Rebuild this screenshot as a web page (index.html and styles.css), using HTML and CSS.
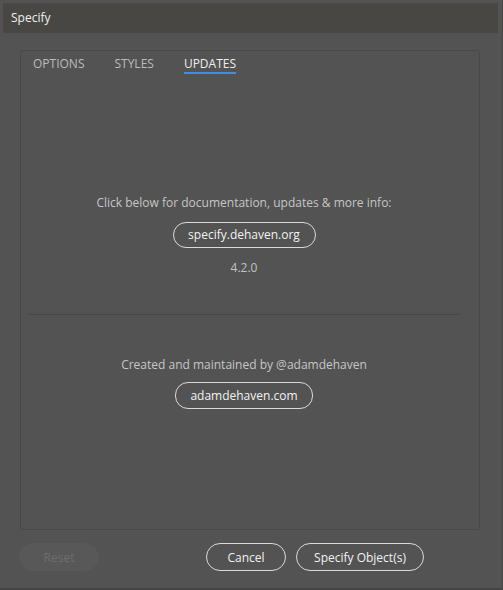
FILE: index.html
```html
<!DOCTYPE html>
<html lang="en">
<head>
<meta charset="utf-8">
<title>Specify</title>
<link rel="stylesheet" href="styles.css">
</head>
<body>
<div class="window">
  <div class="titlebar">Specify</div>
  <div class="panel">
    <div class="tabs">
      <span class="tab">OPTIONS</span>
      <span class="tab">STYLES</span>
      <span class="tab active">UPDATES</span>
    </div>
    <div class="content">
      <p class="label first">Click below for documentation, updates &amp; more info:</p>
      <span class="pill link1">specify.dehaven.org</span>
      <p class="version">4.2.0</p>
      <div class="sep"></div>
      <p class="label second">Created and maintained by @adamdehaven</p>
      <span class="pill link2">adamdehaven.com</span>
    </div>
  </div>
  <div class="footer">
    <span class="btn reset">Reset</span>
    <div class="actions">
      <span class="btn cancel">Cancel</span>
      <span class="btn primary">Specify Object(s)</span>
    </div>
  </div>
</div>
</body>
</html>
```
FILE: styles.css
```css
html, body {
  margin: 0;
  padding: 0;
  background: #4d4d4d;
}
body {
  font-family: "Open Sans", "Noto Sans", sans-serif;
  font-size: 12px;
  line-height: 16px;
  color: #c8c8c8;
}
.window {
  box-sizing: border-box;
  width: 503px;
  height: 590px;
  padding: 3px 4px 3px 3px;
  background: #535353;
  border-right: 1px solid #464646;
  border-bottom: 2px solid #464646;
}
.titlebar {
  height: 30px;
  line-height: 30px;
  padding-left: 8px;
  background: #494743;
  color: #f0f0f0;
}
.panel {
  box-sizing: border-box;
  margin: 17px 18px 0 17px;
  height: 480px;
  border: 1px solid #484848;
  border-radius: 3px;
}
.tabs {
  display: flex;
  gap: 30px;
  padding: 5px 0 0 12px;
}
.tab {
  line-height: 16px;
  border-bottom: 2px solid transparent;
  color: #bcbcbc;
}
.tab.active {
  color: #eeeeee;
  border-bottom-color: #3f8ee1;
}
.content {
  display: flex;
  flex-direction: column;
  align-items: center;
  padding-right: 12px;
}
.label {
  margin: 0;
  color: #c6c6c6;
}
.label.first { margin-top: 121px; }
.label.second { margin-top: 42px; }
.pill {
  box-sizing: border-box;
  height: 26px;
  line-height: 24px;
  border: 1px solid #dadada;
  border-radius: 13px;
  color: #f2f2f2;
  text-align: center;
}
.link1 { margin-top: 11px; width: 143px; }
.link2 { margin-top: 9px; width: 138px; height: 27px; line-height: 25px; }
.version {
  margin: 12px 0 0;
  color: #c2c2c2;
}
.sep {
  align-self: stretch;
  margin: 38px 8px 0 8px;
  height: 1px;
  background: #474747;
}
.footer {
  display: flex;
  align-items: center;
  margin-top: 13px;
  padding-left: 16px;
}
.btn {
  box-sizing: border-box;
  height: 28px;
  line-height: 27px;
  border-radius: 14px;
  text-align: center;
  border: 1px solid #dadada;
  color: #f2f2f2;
}
.reset {
  width: 80px;
  background: #585858;
  border-color: #585858;
  color: #6e6e6e;
}
.actions {
  display: flex;
  gap: 10px;
  margin-left: 107px;
}
.cancel { width: 80px; }
.primary { width: 128px; }
```
